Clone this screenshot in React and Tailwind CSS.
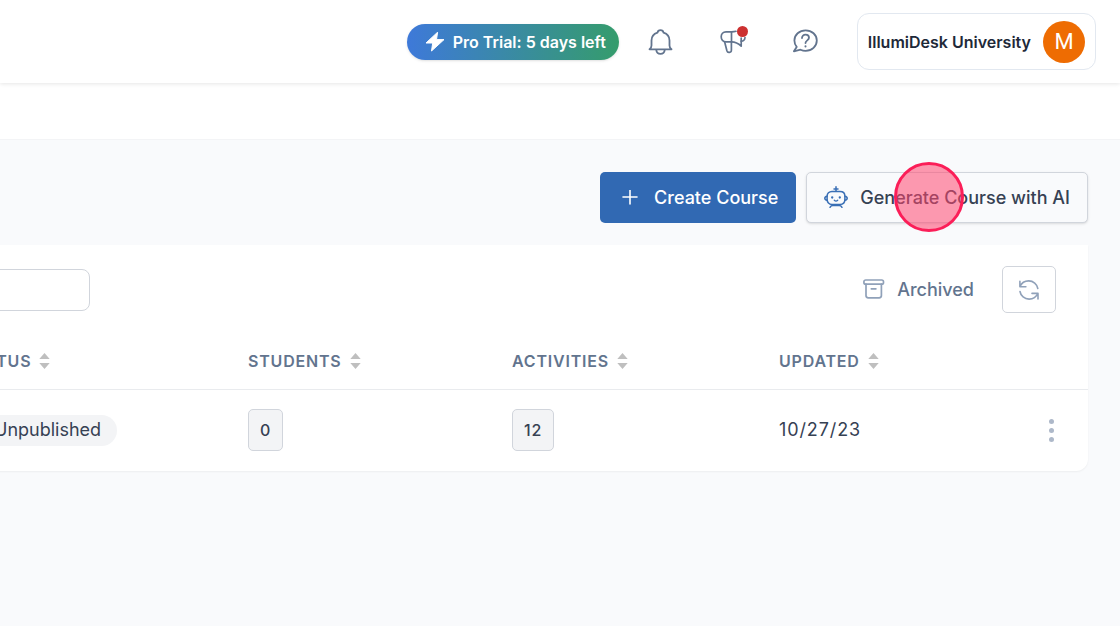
import { useState } from 'react'

const columns = [
  { key: 'status', label: 'Status', className: 'w-72 pl-1' },
  { key: 'students', label: 'Students', className: 'w-66' },
  { key: 'activities', label: 'Activities', className: 'w-[267px]' },
  { key: 'updated', label: 'Updated', className: 'w-auto' },
]

const courses = [
  { id: 1, status: 'Unpublished', students: 0, activities: 12, updated: '10/27/23' },
]

function BoltIcon() {
  return (
    <svg className="size-5" viewBox="0 0 20 20" fill="#fff" stroke="#fff" strokeWidth="1" strokeLinejoin="round">
      <path d="M12.6.2 1 11h6.700L6.500 19 19 7.600h-7.500z" />
    </svg>
  )
}

function BellIcon() {
  return (
    <svg className="size-[26px]" viewBox="0 0 26 26" fill="none" stroke="currentColor" strokeWidth="1.8" strokeLinecap="round" strokeLinejoin="round">
      <path d="M1.500 20.300h22c-1.400-.9-2-2-2-3.800V11.500c0-3.900-2.600-6.800-6-7.900-.3-1.700-1.300-2.500-3-2.500s-2.700.8-3 2.500c-3.400 1.100-6 4-6 7.900v5c0 1.800-.6 2.900-2 3.800z" />
      <path d="M8.300 20.800c.2 2.300 1.900 4 4.200 4s4-1.700 4.200-4" />
    </svg>
  )
}

function MegaphoneIcon() {
  return (
    <svg className="size-[26px]" viewBox="0 0 26 26" fill="none" stroke="currentColor" strokeWidth="1.7" strokeLinecap="round" strokeLinejoin="round">
      <path d="M16 2.300c-1.400.4-2.800.5-4.500.5H6C3 2.800 1.200 5 1.200 7.800S3 12.800 6 12.800h5.500c3.800 0 7 1.700 9.700 4.400V9" />
      <path d="M11.500 2.800v10" />
      <path d="M4.600 12.800l2.300 9c.7 2.500 4.600 2 4.500-.7v-8.300" />
      <path d="M21.200 12.200c2.200 0 3.600-1.400 3.800-3.700" />
    </svg>
  )
}

function HelpIcon() {
  return (
    <svg className="size-[26px]" viewBox="0 0 26 26" fill="none" stroke="currentColor" strokeWidth="1.8" strokeLinecap="round" strokeLinejoin="round">
      <path d="M13.600 1.300c-6.200 0-11.200 4.500-11.200 10.200 0 2.500 .9 4.700 2.300 6.400L1.900 22.300l6.600-1.600c1.600.7 3.300 1.100 5.100 1.100 6.200 0 11.200-4.600 11.200-10.300S19.800 1.300 13.600 1.300z" />
      <path d="M10 9c0-2 1.500-3.400 3.500-3.400s3.500 1.400 3.500 3.200c0 2.500-3.500 2.600-3.500 5.200" />
      <path d="M13.500 17.300v.1" strokeWidth="2" />
    </svg>
  )
}

function PlusIcon() {
  return (
    <svg className="size-4" viewBox="0 0 16 16" fill="none" stroke="currentColor" strokeWidth="1.600" strokeLinecap="round">
      <path d="M8 0v14M1 7h14" />
    </svg>
  )
}

function RobotIcon() {
  return (
    <svg className="size-6" viewBox="0 0 24 24" fill="none" stroke="#3a6fb5" strokeWidth="1.500" strokeLinecap="round" strokeLinejoin="round">
      <path d="M12 .8v4.500M10 2.900h4" />
      <path d="M8 5.500h8c3 0 4.900 1.900 4.900 4.700v3c0 3.100-1.900 5.200-4.900 5.200H8c-3 0-4.900-2.100-4.900-5.200v-3C3.100 7.400 5 5.500 8 5.500z" />
      <path d="M3.100 10.200C1.700 10.400.8 11.200.8 12.200s.9 1.800 2.300 2M20.900 10.200c1.400.2 2.300 1 2.300 2s-.9 1.800-2.300 2" />
      <path d="M10.300 14.300c1 .9 2.400.9 3.400 0" strokeWidth="1.300" />
      <path d="M6 21.300c.7-1.200 1.600-1.700 2.800-1.700h6.400c1.200 0 2.100.5 2.800 1.700" />
      <path d="M8.200 11.300v.2M15.800 11.300v.2" strokeWidth="2.300" />
    </svg>
  )
}

function ArchiveIcon() {
  return (
    <svg className="size-[22px] text-slate-400" viewBox="0 0 22 22" fill="none" stroke="currentColor" strokeWidth="1.700" strokeLinecap="round" strokeLinejoin="round">
      <rect x=".9" y="1" width="19.600" height="4.200" rx="1.800" />
      <path d="M3 5.200v11.300c0 1.400.9 2.300 2.300 2.300h10.800c1.400 0 2.300-.9 2.300-2.300V5.200M8.300 9.800h4.600" />
    </svg>
  )
}

function RefreshIcon() {
  return (
    <svg className="size-5 text-slate-400" viewBox="0 0 20 20" fill="none" stroke="currentColor" strokeWidth="1.600" strokeLinecap="round" strokeLinejoin="round">
      <path d="M.9 1.300v5.400h6M1 6.500C2.500 3 5.800.9 9.700.9c4.600 0 8.400 3.200 9.100 7.600" />
      <path d="M19 18.900v-5.500h-6M18.800 13.500c-1.500 3.500-4.800 5.600-8.700 5.600-4.600 0-8.400-3.200-9.100-7.600" />
    </svg>
  )
}

function SortIcon() {
  return (
    <svg className="h-4 w-[11px]" viewBox="0 0 11 16" fill="#bfbfbf">
      <path d="M5.500 0 10.700 6H.3zM5.500 16 .3 10h10.400z" />
    </svg>
  )
}

function Header() {
  return (
    <header className="relative flex h-[83px] items-center justify-end bg-white px-6 shadow-[0_1px_4px_rgba(0,0,0,0.1)]">
      <button className="flex h-9 items-center gap-2 rounded-full bg-linear-to-r/srgb from-[#3e79d9] to-[#359c6c] pl-[18px] pr-[13px] text-base font-semibold text-white shadow-sm">
        <BoltIcon />
        Pro Trial: 5 days left
      </button>

      <div className="ml-[18px] mr-7 flex gap-6 text-slate-500">
        <button aria-label="Notifications" className="flex size-12 items-center justify-center">
          <BellIcon />
        </button>
        <button aria-label="Announcements" className="relative flex size-12 items-center justify-center">
          <MegaphoneIcon />
          <span className="absolute right-[9px] top-2 size-[11px] rounded-full bg-[#cc3030]" />
        </button>
        <button aria-label="Help" className="flex size-12 items-center justify-center">
          <HelpIcon />
        </button>
      </div>

      <button className="flex h-[57px] items-center gap-3 rounded-xl border border-slate-200 px-[10px] text-base font-semibold text-gray-800">
        IllumiDesk University
        <span className="flex size-[42px] items-center justify-center rounded-full bg-[#ee6c02] font-[Roboto] text-[22px] font-normal text-white">
          M
        </span>
      </button>
    </header>
  )
}

function CourseActions() {
  return (
    <div className="flex justify-end gap-[10px]">
      <button className="flex h-[51px] items-center gap-4 rounded-[5px] bg-[#3169b3] pl-[22px] pr-[18px] text-lg font-medium text-white">
        <PlusIcon />
        Create Course
      </button>
      <button className="relative flex h-[51px] items-center gap-3 rounded-[5px] border border-gray-300 bg-[#f9fafc] px-[17px] text-lg font-medium text-gray-700 shadow-sm">
        <RobotIcon />
        Generate Course with AI
        <span className="absolute -top-[11px] left-[87px] size-[70px] rounded-full border-[3px] border-[#fb1e58] bg-[#ff4770]/55" />
      </button>
    </div>
  )
}

function CourseTable() {
  return (
    <table className="w-full table-fixed text-left">
      <thead>
        <tr className="h-[55px] border-b border-[#e9ebee]">
          {columns.map((col) => (
            <th key={col.key} className={`${col.className} text-slate-500`}>
              <button className="flex items-center gap-2 text-base font-semibold uppercase tracking-wider">
                {col.label}
                <SortIcon />
              </button>
            </th>
          ))}
          <th className="w-[55px]" aria-label="Actions" />
        </tr>
      </thead>
      <tbody>
        {courses.map((course) => (
          <tr key={course.id} className="h-[82px] text-lg text-gray-700">
            <td>
              <span className="inline-flex h-[31px] items-center rounded-full bg-gray-100 pl-[34px] pr-4">{course.status}</span>
            </td>
            <td>
              <span className="inline-flex h-[42px] items-center rounded-[5px] border border-gray-300 bg-gray-100 px-[11px] text-base font-medium tracking-wider">
                {course.students}
              </span>
            </td>
            <td>
              <span className="inline-flex h-[42px] items-center rounded-[5px] border border-gray-300 bg-gray-100 px-[11px] text-base font-medium tracking-wider">
                {course.activities}
              </span>
            </td>
            <td className="tracking-wider">{course.updated}</td>
            <td>
              <button aria-label="Course menu" className="flex size-9 flex-col items-center justify-center gap-1">
                <span className="size-[5px] rounded-full bg-[#adb8c9]" />
                <span className="size-[5px] rounded-full bg-[#adb8c9]" />
                <span className="size-[5px] rounded-full bg-[#adb8c9]" />
              </button>
            </td>
          </tr>
        ))}
      </tbody>
    </table>
  )
}

export default function App() {
  const [search, setSearch] = useState('')

  return (
    <div className="min-h-screen overflow-hidden bg-[#f9fafc] font-[Inter,sans-serif]">
      <Header />
      <div className="h-[57px] border-b border-gray-100 bg-white" />

      <main className="pr-8 pt-8">
        <CourseActions />

        {/* the card runs past the left edge of the page */}
        <section className="-ml-10 mt-[22px] rounded-b-xl bg-white shadow-xs">
          <div className="flex h-[89px] items-center justify-between pr-8">
            <input
              aria-label="Search courses"
              value={search}
              onChange={(e) => setSearch(e.target.value)}
              className="h-[42px] w-[130px] rounded-lg border border-gray-300 bg-white px-3 text-lg"
            />
            <div className="flex items-center gap-7">
              <button className="flex items-center gap-3 text-lg font-medium text-slate-500">
                <ArchiveIcon />
                Archived
              </button>
              <button aria-label="Refresh" className="flex h-[47px] w-[54px] items-center justify-center rounded-[5px] border border-gray-300">
                <RefreshIcon />
              </button>
            </div>
          </div>
          <CourseTable />
        </section>
      </main>
    </div>
  )
}
